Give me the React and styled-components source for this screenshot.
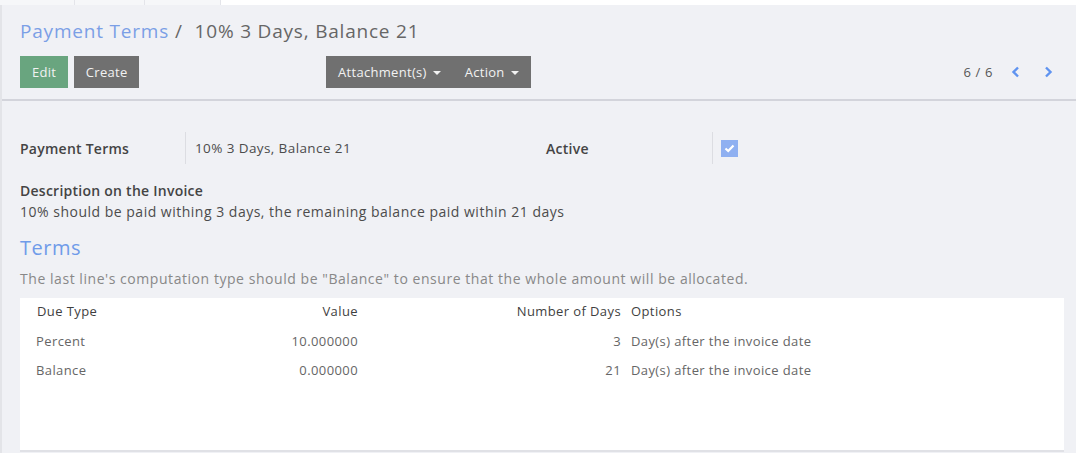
import React from "react";
import styled, { createGlobalStyle } from "styled-components";

const GlobalStyle = createGlobalStyle`
  html, body {
    margin: 0;
    padding: 0;
    background: #ffffff;
    font-family: "Open Sans", "Liberation Sans", sans-serif;
    color: #4c4c4c;
  }
`;

const blue = "#7b9fe6";

const Page = styled.div`
  width: 1076px;
  height: 453px;
  overflow: hidden;
  display: flex;
  flex-direction: column;
`;

const TabStrip = styled.div`
  display: flex;
  height: 5px;
  flex-shrink: 0;
  background: #ffffff;
`;

const Tab = styled.div`
  width: ${({ w }) => w}px;
  background: #f6f7f9;
  border-right: 1px solid #e4e5ea;
`;

const Main = styled.div`
  flex: 1;
  background: #f0f1f5;
  border-left: 2px solid #e3e4e8;
  display: flex;
  flex-direction: column;
`;

const ControlPanel = styled.div`
  padding: 15px 0 0 18px;
  border-bottom: 2px solid #d3d4db;
  height: 96px;
  flex-shrink: 0;
  box-sizing: border-box;
`;

const Breadcrumb = styled.div`
  font-size: 19px;
  letter-spacing: 0.8px;
  line-height: 22px;
  color: #666666;
  display: flex;
  gap: 6px;
`;

const Crumb = styled.span`
  color: ${blue};
`;

const ButtonRow = styled.div`
  margin-top: 14px;
  display: flex;
  align-items: center;
`;

const Button = styled.button`
  height: 32px;
  border: none;
  padding: 0 ${({ pad }) => pad || 13}px;
  margin-right: ${({ gap }) => gap || 0}px;
  background: ${({ variant }) => (variant === "primary" ? "#69a57f" : "#707070")};
  color: #f2f2f2;
  font-family: inherit;
  font-size: 13px;
  letter-spacing: 0.3px;
  display: flex;
  align-items: center;
  gap: 4px;
`;

const ButtonGroup = styled.div`
  display: flex;
  background: #737373;
  margin-left: 187px;
`;

const Caret = styled.span`
  display: inline-block;
  width: 0;
  height: 0;
  border-left: 4px solid transparent;
  border-right: 4px solid transparent;
  border-top: 4px solid #f2f2f2;
  margin-left: 2px;
  margin-top: 2px;
`;

const Pager = styled.div`
  margin-left: auto;
  margin-right: 19px;
  display: flex;
  align-items: center;
  font-size: 13px;
  letter-spacing: 0.6px;
  color: #555555;
  gap: 14px;
`;

const Arrow = styled.span`
  color: #5f93f0;
  display: flex;
  width: 18px;
  justify-content: center;
`;

const Sheet = styled.div`
  padding: 31px 0 0 18px;
  display: flex;
  flex-direction: column;
`;

const FieldRow = styled.div`
  display: grid;
  grid-template-columns: 165px 361px 166px 40px;
  align-items: center;
  height: 32px;
`;

const Label = styled.div`
  font-size: 14px;
  font-weight: 600;
  letter-spacing: 0.25px;
  color: #444444;
`;

const Value = styled.div`
  font-size: 13.5px;
  letter-spacing: 0.4px;
  color: #4c4c4c;
  border-left: 1px solid #dcdde2;
  padding-left: 9px;
  height: 32px;
  display: flex;
  align-items: center;
`;

const Check = styled.span`
  width: 17px;
  height: 17px;
  background: #8fb0f1;
  display: flex;
  align-items: center;
  justify-content: center;
  margin-left: -1px;
`;

const DescLabel = styled(Label)`
  margin-top: 18px;
  line-height: 18px;
`;

const DescText = styled.div`
  font-size: 14px;
  letter-spacing: 0.5px;
  line-height: 18px;
  margin-top: 3px;
  color: #4c4c4c;
`;

const SectionTitle = styled.div`
  color: #6f9be9;
  font-size: 20px;
  font-weight: 500;
  letter-spacing: 0.5px;
  margin-top: 14px;
  line-height: 26px;
`;

const Help = styled.div`
  font-size: 14px;
  letter-spacing: 0.55px;
  color: #888888;
  margin-top: 9px;
  line-height: 18px;
`;

const TableBox = styled.div`
  margin-top: 10px;
  width: 1044px;
  height: 154px;
  background: #ffffff;
  border-bottom: 2px solid #e0e1e6;
  box-sizing: border-box;
`;

const Table = styled.table`
  border-collapse: collapse;
  font-size: 13px;
  letter-spacing: 0.4px;
  margin-top: -2px;
`;

const Th = styled.th`
  font-weight: 500;
  color: #3f3f3f;
  text-align: ${({ right }) => (right ? "right" : "left")};
  padding: 0 ${({ pr }) => pr ?? 5}px 0 ${({ pl }) => pl ?? 5}px;
  height: 30px;
  width: ${({ w }) => (w ? `${w}px` : "auto")};
`;

const Td = styled.td`
  color: #666666;
  text-align: ${({ right }) => (right ? "right" : "left")};
  padding: 0 ${({ pr }) => pr ?? 5}px 0 ${({ pl }) => pl ?? 5}px;
  height: 29px;
`;

const lines = [
  { type: "Percent", value: "10.000000", days: 3 },
  { type: "Balance", value: "0.000000", days: 21 },
];

export default function App() {
  return (
    <Page>
      <GlobalStyle />
      <TabStrip>
        <Tab w={74} />
        <Tab w={69} />
        <Tab w={75} />
      </TabStrip>
      <Main>
        <ControlPanel>
          <Breadcrumb>
            <Crumb>Payment Terms</Crumb>
            <span>/</span>
            <span>&nbsp;10% 3 Days, Balance 21</span>
          </Breadcrumb>
          <ButtonRow>
            <Button variant="primary" pad={12} gap={6}>Edit</Button>
            <Button pad={11.5}>Create</Button>
            <ButtonGroup>
              <Button pad={12}>Attachment(s) <Caret /></Button>
              <Button pad={12}>Action <Caret /></Button>
            </ButtonGroup>
            <Pager>
              <span>6 / 6</span>
              <Arrow>
                <svg width="10" height="12" viewBox="0 0 10 12">
                  <path d="M7 1.5 L2.5 6 L7 10.5" fill="none" stroke="currentColor" strokeWidth="2.4" />
                </svg>
              </Arrow>
              <Arrow>
                <svg width="10" height="12" viewBox="0 0 10 12">
                  <path d="M3 1.5 L7.5 6 L3 10.5" fill="none" stroke="currentColor" strokeWidth="2.4" />
                </svg>
              </Arrow>
            </Pager>
          </ButtonRow>
        </ControlPanel>
        <Sheet>
          <FieldRow>
            <Label>Payment Terms</Label>
            <Value>10% 3 Days, Balance 21</Value>
            <Label>Active</Label>
            <Value>
              <Check>
                <svg width="11" height="9" viewBox="0 0 11 9">
                  <path d="M1.5 4.5 L4.2 7 L9.5 1.5" fill="none" stroke="#ffffff" strokeWidth="2.2" />
                </svg>
              </Check>
            </Value>
          </FieldRow>
          <DescLabel>Description on the Invoice</DescLabel>
          <DescText>10% should be paid withing 3 days, the remaining balance paid within 21 days</DescText>
          <SectionTitle>Terms</SectionTitle>
          <Help>The last line's computation type should be "Balance" to ensure that the whole amount will be allocated.</Help>
          <TableBox>
            <Table>
              <thead>
                <tr>
                  <Th pl={17} w={150}>Due Type</Th>
                  <Th right w={161}>Value</Th>
                  <Th right w={253}>Number of Days</Th>
                  <Th>Options</Th>
                </tr>
              </thead>
              <tbody>
                {lines.map((l) => (
                  <tr key={l.type}>
                    <Td pl={16}>{l.type}</Td>
                    <Td right>{l.value}</Td>
                    <Td right>{l.days}</Td>
                    <Td>Day(s) after the invoice date</Td>
                  </tr>
                ))}
              </tbody>
            </Table>
          </TableBox>
        </Sheet>
      </Main>
    </Page>
  );
}
